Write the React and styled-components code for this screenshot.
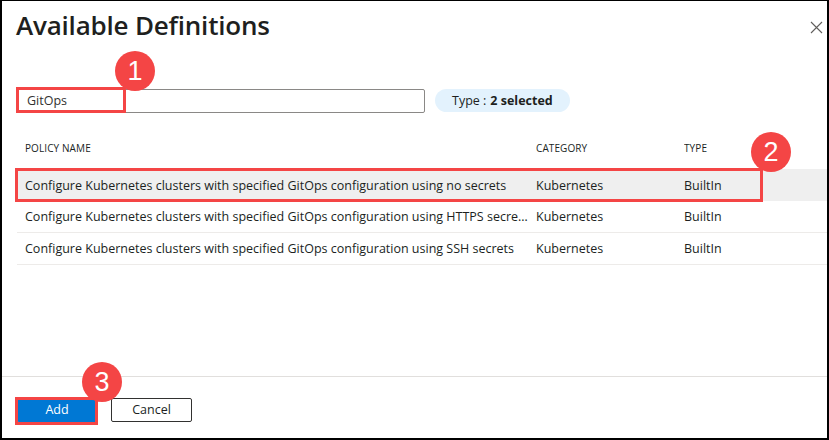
import React from 'react';
import styled, { createGlobalStyle } from 'styled-components';

const GlobalStyle = createGlobalStyle`
  html, body {
    margin: 0;
    padding: 0;
    background: #ffffff;
  }
  * {
    box-sizing: border-box;
  }
`

const StyledDialog = styled.div`
  position: relative;
  width: 829px;
  height: 440px;
  border-style: solid;
  border-color: #000;
  border-width: 1px 2px 2px 2px;
  background: #fff;
  display: flex;
  flex-direction: column;
  font-family: "Open Sans", "Noto Sans", sans-serif;
  color: #323130;
`

const StyledHeader = styled.div`
  display: flex;
  align-items: flex-start;
  justify-content: space-between;
  padding: 6px 0 0 14px;
  height: 87px;
`

const StyledTitle = styled.h1`
  margin: 0;
  font-size: 26px;
  font-weight: 600;
  line-height: 36px;
  color: #201f1e;
  letter-spacing: -0.2px;
`

const StyledClose = styled.button`
  border: none;
  background: none;
  padding: 0;
  margin: 12px 3px 0 0;
  width: 16px;
  height: 16px;
  display: flex;
  align-items: center;
  justify-content: center;
  cursor: pointer;
`

const StyledSearchRow = styled.div`
  display: flex;
  align-items: center;
  gap: 10px;
  padding-left: 15px;
  height: 24px;
`

const StyledSearchWrap = styled.div`
  position: relative;
  width: 408px;
  height: 24px;
`

const StyledInput = styled.input`
  width: 100%;
  height: 100%;
  border: 1px solid #8a8886;
  border-radius: 2px;
  padding: 0 9px;
  font-family: inherit;
  font-size: 12.5px;
  color: #323130;
  outline: none;
`

const StyledPill = styled.div`
  height: 23px;
  padding: 0 17px;
  border-radius: 12px;
  background: #e3f2fd;
  display: flex;
  align-items: center;
  font-size: 12.5px;
  color: #201f1e;
  b {
    font-weight: 700;
    margin-left: 4px;
  }
`

const StyledTable = styled.div`
  margin-top: 23px;
  margin-left: 15px;
`

const StyledGridRow = styled.div`
  position: relative;
  display: grid;
  grid-template-columns: 511px 148px 1fr;
  align-items: center;
  height: ${props => props.head ? '34px' : '32px'};
  padding-left: 8px;
  padding-bottom: ${props => props.head ? '9px' : '0'};
  background: ${props => props.selected ? '#efefef' : 'transparent'};
  border-bottom: ${props => props.head || props.selected ? 'none' : '1px solid #edebe9'};
  font-size: ${props => props.head ? '10px' : '12.5px'};
  letter-spacing: ${props => props.head ? '0.1px' : '0'};
  color: #201f1e;
`

const StyledCell = styled.div`
  white-space: nowrap;
  overflow: hidden;
  text-overflow: ellipsis;
  padding-right: 8px;
`

const StyledFooter = styled.div`
  margin-top: auto;
  border-top: 1px solid #e1dfdd;
  height: 62px;
  display: flex;
  align-items: center;
  gap: 14px;
  padding: 4px 0 0 15px;
`

const StyledButton = styled.button`
  position: relative;
  width: ${props => props.primary ? '80px' : '81px'};
  height: 24px;
  border-radius: 2px;
  border: 1px solid ${props => props.primary ? '#0078d4' : '#323130'};
  background: ${props => props.primary ? '#0078d4' : '#fff'};
  color: ${props => props.primary ? '#fff' : '#201f1e'};
  font-family: inherit;
  font-size: 12.5px;
  padding: 0;
  cursor: pointer;
`

const StyledHighlight = styled.span`
  position: absolute;
  top: ${props => props.top}px;
  left: ${props => props.left}px;
  width: ${props => props.w}px;
  height: ${props => props.h}px;
  border: 3px solid #f44545;
  pointer-events: none;
`

const StyledStep = styled.span`
  position: absolute;
  left: ${props => props.x - 20}px;
  top: ${props => props.y - 20}px;
  width: 40px;
  height: 40px;
  border-radius: 50%;
  background: #f44545;
  color: #fff;
  display: flex;
  align-items: center;
  justify-content: center;
  font-family: "Liberation Sans", Arial, sans-serif;
  font-size: 27px;
  line-height: 1;
  z-index: 2;
`

const rows = [
  { name: 'Configure Kubernetes clusters with specified GitOps configuration using no secrets', selected: true },
  { name: 'Configure Kubernetes clusters with specified GitOps configuration using HTTPS secrets' },
  { name: 'Configure Kubernetes clusters with specified GitOps configuration using SSH secrets' },
]

export default function App() {
  return (
    <>
      <GlobalStyle />
      <StyledDialog>
        <StyledHeader>
          <StyledTitle>Available Definitions</StyledTitle>
          <StyledClose aria-label="Close">
            <svg width="13" height="13" viewBox="0 0 13 13">
              <path d="M1 1 L12 12 M12 1 L1 12" stroke="#605e5c" strokeWidth="1.1" fill="none" />
            </svg>
          </StyledClose>
        </StyledHeader>

        <StyledSearchRow>
          <StyledSearchWrap>
            <StyledInput defaultValue="GitOps" />
            <StyledHighlight top={-1} left={-1} w={110} h={26} />
          </StyledSearchWrap>
          <StyledPill>Type :<b>2 selected</b></StyledPill>
        </StyledSearchRow>

        <StyledTable>
          <StyledGridRow head>
            <StyledCell>POLICY NAME</StyledCell>
            <StyledCell>CATEGORY</StyledCell>
            <StyledCell>TYPE</StyledCell>
          </StyledGridRow>
          {rows.map(row => (
            <StyledGridRow key={row.name} selected={row.selected}>
              <StyledCell>{row.name}</StyledCell>
              <StyledCell>Kubernetes</StyledCell>
              <StyledCell>BuiltIn</StyledCell>
              {row.selected && <StyledHighlight top={-1} left={-2} w={748} h={34} />}
            </StyledGridRow>
          ))}
        </StyledTable>

        <StyledFooter>
          <StyledButton primary>
            Add
            <StyledHighlight top={-2} left={-3} w={83} h={28} />
          </StyledButton>
          <StyledButton>Cancel</StyledButton>
        </StyledFooter>

        <StyledStep x={133} y={70}>1</StyledStep>
        <StyledStep x={769} y={151}>2</StyledStep>
        <StyledStep x={100} y={381}>3</StyledStep>
      </StyledDialog>
    </>
  )
}
